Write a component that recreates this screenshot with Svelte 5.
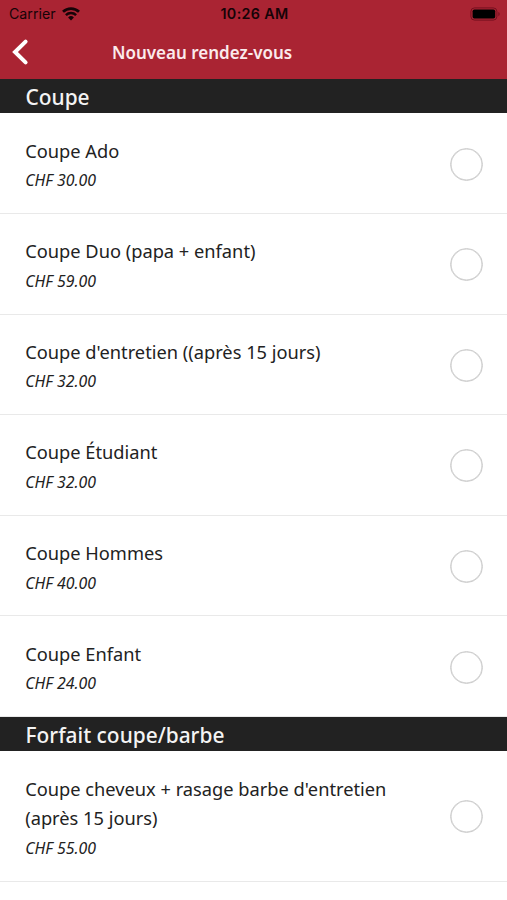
<script lang="ts">
	type Service = { name: string; price: string };
	type Section = { title: string; services: Service[] };

	const sections: Section[] = [
		{
			title: 'Coupe',
			services: [
				{ name: 'Coupe Ado', price: '30.00' },
				{ name: 'Coupe Duo (papa + enfant)', price: '59.00' },
				{ name: "Coupe d'entretien ((après 15 jours)", price: '32.00' },
				{ name: 'Coupe Étudiant', price: '32.00' },
				{ name: 'Coupe Hommes', price: '40.00' },
				{ name: 'Coupe Enfant', price: '24.00' }
			]
		},
		{
			title: 'Forfait coupe/barbe',
			services: [
				{ name: "Coupe cheveux + rasage barbe d'entretien (après 15 jours)", price: '55.00' }
			]
		}
	];

	let selected = $state('');
</script>

<div class="screen">
	<header>
		<div class="status-bar">
			<div class="carrier">
				<span>Carrier</span>
				<svg width="18" height="14" viewBox="0 0 18 14" fill="none" stroke="#160307">
					<path d="M1 4.8a11.5 11.5 0 0 1 16 0" stroke-width="2.7" />
					<path d="M3.9 8.1a7.3 7.3 0 0 1 10.2 0" stroke-width="2.5" />
					<path d="M9 13.6l-2.9-3.1a4.1 4.1 0 0 1 5.8 0z" fill="#160307" stroke="none" />
				</svg>
			</div>
			<span class="time">10:26 AM</span>
			<svg class="battery" width="31" height="14" viewBox="0 0 31 14">
				<rect x="0.9" y="0.9" width="26" height="12.2" rx="3.6" fill="none" stroke="#75101f" />
				<rect x="2.6" y="2.5" width="22.6" height="9" rx="1.8" fill="#000" />
				<path d="M28.4 5v4.2c1.7-.6 1.7-3.6 0-4.2z" fill="#75101f" />
			</svg>
		</div>
		<div class="nav">
			<button class="back" aria-label="Retour">
				<svg width="18" height="28" viewBox="0 0 18 28" fill="none" stroke="#fff">
					<path d="M14.6 3.6L4 14 14.6 24.4" stroke-width="4" stroke-linecap="round" />
				</svg>
			</button>
			<h1>Nouveau rendez-vous</h1>
		</div>
	</header>

	{#each sections as section}
		<h2>{section.title}</h2>
		<ul>
			{#each section.services as service}
				<li>
					<div class="info">
						<div class="name">{service.name}</div>
						<div class="price">CHF {service.price}</div>
					</div>
					<button
						class="radio"
						class:checked={selected === service.name}
						aria-label={service.name}
						onclick={() => (selected = service.name)}
					></button>
				</li>
			{/each}
		</ul>
	{/each}
</div>

<style>
	:global(body) {
		margin: 0;
		background: #fff;
	}

	.screen {
		height: 900px;
		overflow: hidden;
		font-family: 'Noto Sans', sans-serif;
		color: #222;
		background: #fff;
	}

	header {
		height: 79px;
		background: #aa2433;
	}

	.status-bar {
		display: grid;
		grid-template-columns: 1fr auto 1fr;
		align-items: center;
		height: 27px;
		padding: 0 6px 0 9px;
		font-family: Inter, sans-serif;
		font-size: 14.2px;
		color: #160307;
	}

	.carrier {
		display: flex;
		align-items: center;
		gap: 6px;
	}

	.time {
		margin-right: 1px;
		font-size: 14.3px;
		font-weight: 600;
		letter-spacing: 0.35px;
	}

	.battery {
		justify-self: end;
	}

	.nav {
		display: flex;
		align-items: center;
		height: 50px;
		color: #fff;
	}

	.back {
		display: flex;
		width: 112px;
		padding: 0 0 0 11px;
		border: none;
		background: none;
	}

	h1 {
		margin: 0;
		font-size: 17px;
		font-weight: 600;
		color: #fbeaec;
	}

	h2 {
		box-sizing: border-box;
		height: 34.4px;
		margin: 0;
		padding-left: 25.5px;
		font-size: 20.9px;
		font-weight: 500;
		line-height: 36px;
		color: #f4f4f4;
		background: #222;
	}

	ul {
		margin: 0;
		padding: 0;
		list-style: none;
	}

	li {
		display: flex;
		box-sizing: border-box;
		align-items: flex-start;
		justify-content: space-between;
		min-height: 100.6px;
		padding: 22.2px 24px 16.4px 25.2px;
		border-bottom: 1px solid #e9e9e9;
	}

	.info {
		max-width: 390px;
	}

	.name {
		font-size: 18.25px;
		line-height: 29.7px;
	}

	.price {
		font-size: 15.9px;
		font-style: italic;
		line-height: 31.3px;
	}

	.radio {
		flex: none;
		align-self: center;
		box-sizing: border-box;
		width: 33px;
		height: 33px;
		margin-bottom: 4px;
		padding: 0;
		border: 1px solid #ccc;
		border-radius: 50%;
		background: #fff;
		box-shadow: inset 0 0 0 0.6px #d0d0d0;
	}

	.radio.checked {
		background: #aa2433;
	}
</style>
